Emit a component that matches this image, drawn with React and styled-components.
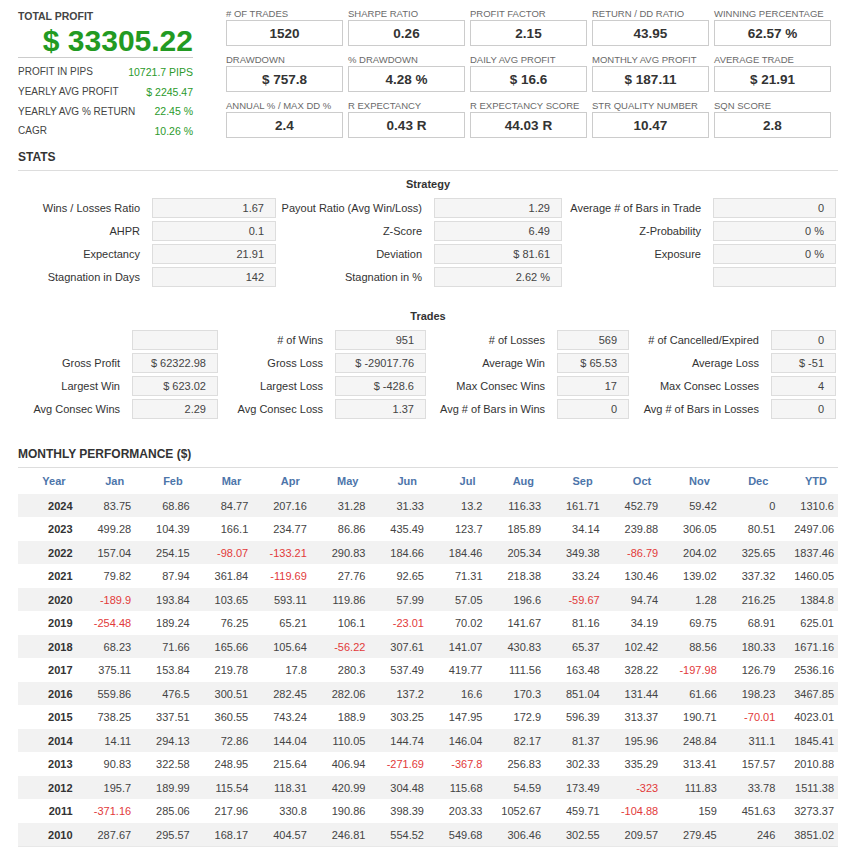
import styled, { createGlobalStyle } from 'styled-components';

const GlobalStyle = createGlobalStyle`
  body {
    margin: 0;
    background: #fff;
    font-family: "Liberation Sans", Arial, sans-serif;
    color: #333;
  }
`;

const Page = styled.div`
  width: 849px;
  padding: 0 11px 0 18px;
  box-sizing: border-box;
`;

const Top = styled.div`
  display: flex;
  align-items: flex-start;
  gap: 33px;
`;

const ProfitPanel = styled.div`
  width: 175px;
  padding-top: 9px;
`;

const ProfitTitle = styled.div`
  font-size: 10.5px;
  font-weight: bold;
  line-height: 14px;
  color: #444;
`;

const ProfitValue = styled.div`
  font-size: 30px;
  font-weight: bold;
  line-height: 32px;
  margin-top: 2px;
  text-align: right;
  color: #229a22;
  border-bottom: 1px solid #ccc;
`;

const ProfitRows = styled.div`
  padding-top: 4px;
`;

const ProfitRow = styled.div`
  display: flex;
  justify-content: space-between;
  align-items: center;
  height: 19.7px;
  font-size: 10px;
  color: #444;

  span:last-child {
    font-size: 10.5px;
    color: #2b9a2b;
  }
`;

const StatGrid = styled.div`
  display: grid;
  grid-template-columns: repeat(5, 117px);
  column-gap: 5px;
  row-gap: 8px;
  padding-top: 8px;
`;

const StatLabel = styled.div`
  font-size: 9.5px;
  line-height: 12px;
  color: #6a6a6a;
  white-space: nowrap;
`;

const StatBox = styled.div`
  height: 26px;
  box-sizing: border-box;
  border: 1px solid #ccc;
  display: flex;
  align-items: center;
  justify-content: center;
  font-size: 13.5px;
  font-weight: bold;
  color: #333;
`;

const SectionTitle = styled.div`
  font-size: 12px;
  font-weight: bold;
  line-height: 16px;
  color: #333;
  margin-top: ${(p) => p.$top}px;
  padding-bottom: 5px;
  border-bottom: 1px solid #ddd;
`;

const SubTitle = styled.div`
  font-size: 11px;
  font-weight: bold;
  line-height: 14px;
  text-align: center;
  color: #333;
  margin: ${(p) => p.$top}px 0 7px;
`;

const FieldGrid = styled.div`
  display: grid;
  grid-template-columns: ${(p) => p.$cols};
  column-gap: 12px;
  row-gap: 3px;
`;

const FieldLabel = styled.div`
  height: 20px;
  display: flex;
  align-items: center;
  justify-content: flex-end;
  font-size: 11px;
  color: #333;
  white-space: nowrap;
`;

const FieldBox = styled.div`
  height: 20px;
  line-height: 18px;
  box-sizing: border-box;
  border: 1px solid #ddd;
  background: #f5f5f5;
  font-size: 11px;
  text-align: right;
  padding-right: 11px;
  color: #444;
  white-space: nowrap;
`;

const Table = styled.table`
  width: 820px;
  border-collapse: collapse;
  table-layout: fixed;
  border-bottom: 1px solid #e8e8e8;
`;

const Th = styled.th`
  height: 26px;
  padding: 0 11px 0 0;
  text-align: right;
  font-size: 11px;
  font-weight: bold;
  color: #4d75aa;
`;

const Tr = styled.tr`
  background: ${(p) => (p.$shaded ? '#f2f2f2' : '#fff')};
`;

const Td = styled.td`
  height: 23.5px;
  padding: 0 4px 0 0;
  text-align: right;
  font-size: 11px;
  font-weight: ${(p) => (p.$year ? 'bold' : 'normal')};
  color: ${(p) => (p.$year ? '#333' : p.$neg ? '#e23a3a' : '#444')};
`;

const profitRows = [
  ['PROFIT IN PIPS', '10721.7 PIPS'],
  ['YEARLY AVG PROFIT', '$ 2245.47'],
  ['YEARLY AVG % RETURN', '22.45 %'],
  ['CAGR', '10.26 %'],
];

const stats = [
  ['# OF TRADES', '1520'],
  ['SHARPE RATIO', '0.26'],
  ['PROFIT FACTOR', '2.15'],
  ['RETURN / DD RATIO', '43.95'],
  ['WINNING PERCENTAGE', '62.57 %'],
  ['DRAWDOWN', '$ 757.8'],
  ['% DRAWDOWN', '4.28 %'],
  ['DAILY AVG PROFIT', '$ 16.6'],
  ['MONTHLY AVG PROFIT', '$ 187.11'],
  ['AVERAGE TRADE', '$ 21.91'],
  ['ANNUAL % / MAX DD %', '2.4'],
  ['R EXPECTANCY', '0.43 R'],
  ['R EXPECTANCY SCORE', '44.03 R'],
  ['STR QUALITY NUMBER', '10.47'],
  ['SQN SCORE', '2.8'],
];

const strategy = [
  ['Wins / Losses Ratio', '1.67', 'Payout Ratio (Avg Win/Loss)', '1.29', 'Average # of Bars in Trade', '0'],
  ['AHPR', '0.1', 'Z-Score', '6.49', 'Z-Probability', '0 %'],
  ['Expectancy', '21.91', 'Deviation', '$ 81.61', 'Exposure', '0 %'],
  ['Stagnation in Days', '142', 'Stagnation in %', '2.62 %', '', ''],
];

const trades = [
  ['', '', '# of Wins', '951', '# of Losses', '569', '# of Cancelled/Expired', '0'],
  ['Gross Profit', '$ 62322.98', 'Gross Loss', '$ -29017.76', 'Average Win', '$ 65.53', 'Average Loss', '$ -51'],
  ['Largest Win', '$ 623.02', 'Largest Loss', '$ -428.6', 'Max Consec Wins', '17', 'Max Consec Losses', '4'],
  ['Avg Consec Wins', '2.29', 'Avg Consec Loss', '1.37', 'Avg # of Bars in Wins', '0', 'Avg # of Bars in Losses', '0'],
];

const months = ['Year', 'Jan', 'Feb', 'Mar', 'Apr', 'May', 'Jun', 'Jul', 'Aug', 'Sep', 'Oct', 'Nov', 'Dec', 'YTD'];

const monthly = `2024 83.75 68.86 84.77 207.16 31.28 31.33 13.2 116.33 161.71 452.79 59.42 0 1310.6
2023 499.28 104.39 166.1 234.77 86.86 435.49 123.7 185.89 34.14 239.88 306.05 80.51 2497.06
2022 157.04 254.15 -98.07 -133.21 290.83 184.66 184.46 205.34 349.38 -86.79 204.02 325.65 1837.46
2021 79.82 87.94 361.84 -119.69 27.76 92.65 71.31 218.38 33.24 130.46 139.02 337.32 1460.05
2020 -189.9 193.84 103.65 593.11 119.86 57.99 57.05 196.6 -59.67 94.74 1.28 216.25 1384.8
2019 -254.48 189.24 76.25 65.21 106.1 -23.01 70.02 141.67 81.16 34.19 69.75 68.91 625.01
2018 68.23 71.66 165.66 105.64 -56.22 307.61 141.07 430.83 65.37 102.42 88.56 180.33 1671.16
2017 375.11 153.84 219.78 17.8 280.3 537.49 419.77 111.56 163.48 328.22 -197.98 126.79 2536.16
2016 559.86 476.5 300.51 282.45 282.06 137.2 16.6 170.3 851.04 131.44 61.66 198.23 3467.85
2015 738.25 337.51 360.55 743.24 188.9 303.25 147.95 172.9 596.39 313.37 190.71 -70.01 4023.01
2014 14.11 294.13 72.86 144.04 110.05 144.74 146.04 82.17 81.37 195.96 248.84 311.1 1845.41
2013 90.83 322.58 248.95 215.64 406.94 -271.69 -367.8 256.83 302.33 335.29 313.41 157.57 2010.88
2012 195.7 189.99 115.54 118.31 420.99 304.48 115.68 54.59 173.49 -323 111.83 33.78 1511.38
2011 -371.16 285.06 217.96 330.8 190.86 398.39 203.33 1052.67 459.71 -104.88 159 451.63 3273.37
2010 287.67 295.57 168.17 404.57 246.81 554.52 549.68 306.46 302.55 209.57 279.45 246 3851.02`
  .split('\n')
  .map((line) => line.trim().split(' '));

function Fields({ rows, cols }) {
  return (
    <FieldGrid $cols={cols}>
      {rows.map((row, r) =>
        row.map((cell, c) =>
          c % 2 === 0 ? (
            <FieldLabel key={`${r}-${c}`}>{cell}</FieldLabel>
          ) : (
            <FieldBox key={`${r}-${c}`}>{cell}</FieldBox>
          )
        )
      )}
    </FieldGrid>
  );
}

function App() {
  return (
    <Page>
      <GlobalStyle />
      <Top>
        <ProfitPanel>
          <ProfitTitle>TOTAL PROFIT</ProfitTitle>
          <ProfitValue>$ 33305.22</ProfitValue>
          <ProfitRows>
            {profitRows.map(([label, value]) => (
              <ProfitRow key={label}>
                <span>{label}</span>
                <span>{value}</span>
              </ProfitRow>
            ))}
          </ProfitRows>
        </ProfitPanel>
        <StatGrid>
          {stats.map(([label, value]) => (
            <div key={label}>
              <StatLabel>{label}</StatLabel>
              <StatBox>{value}</StatBox>
            </div>
          ))}
        </StatGrid>
      </Top>

      <SectionTitle $top={8}>STATS</SectionTitle>
      <SubTitle $top={6}>Strategy</SubTitle>
      <Fields rows={strategy} cols="122px 124px 134px 128px 127px 123px" />

      <SubTitle $top={22}>Trades</SubTitle>
      <Fields rows={trades} cols="102px 86px 93px 91px 107px 72px 118px 65px" />

      <SectionTitle $top={27}>MONTHLY PERFORMANCE ($)</SectionTitle>
      <Table>
        <thead>
          <tr>
            {months.map((m) => (
              <Th key={m}>{m}</Th>
            ))}
          </tr>
        </thead>
        <tbody>
          {monthly.map((row, i) => (
            <Tr key={row[0]} $shaded={i % 2 === 0}>
              {row.map((v, j) => (
                <Td key={j} $year={j === 0} $neg={v.startsWith('-')}>
                  {v}
                </Td>
              ))}
            </Tr>
          ))}
        </tbody>
      </Table>
    </Page>
  );
}

export default App;
